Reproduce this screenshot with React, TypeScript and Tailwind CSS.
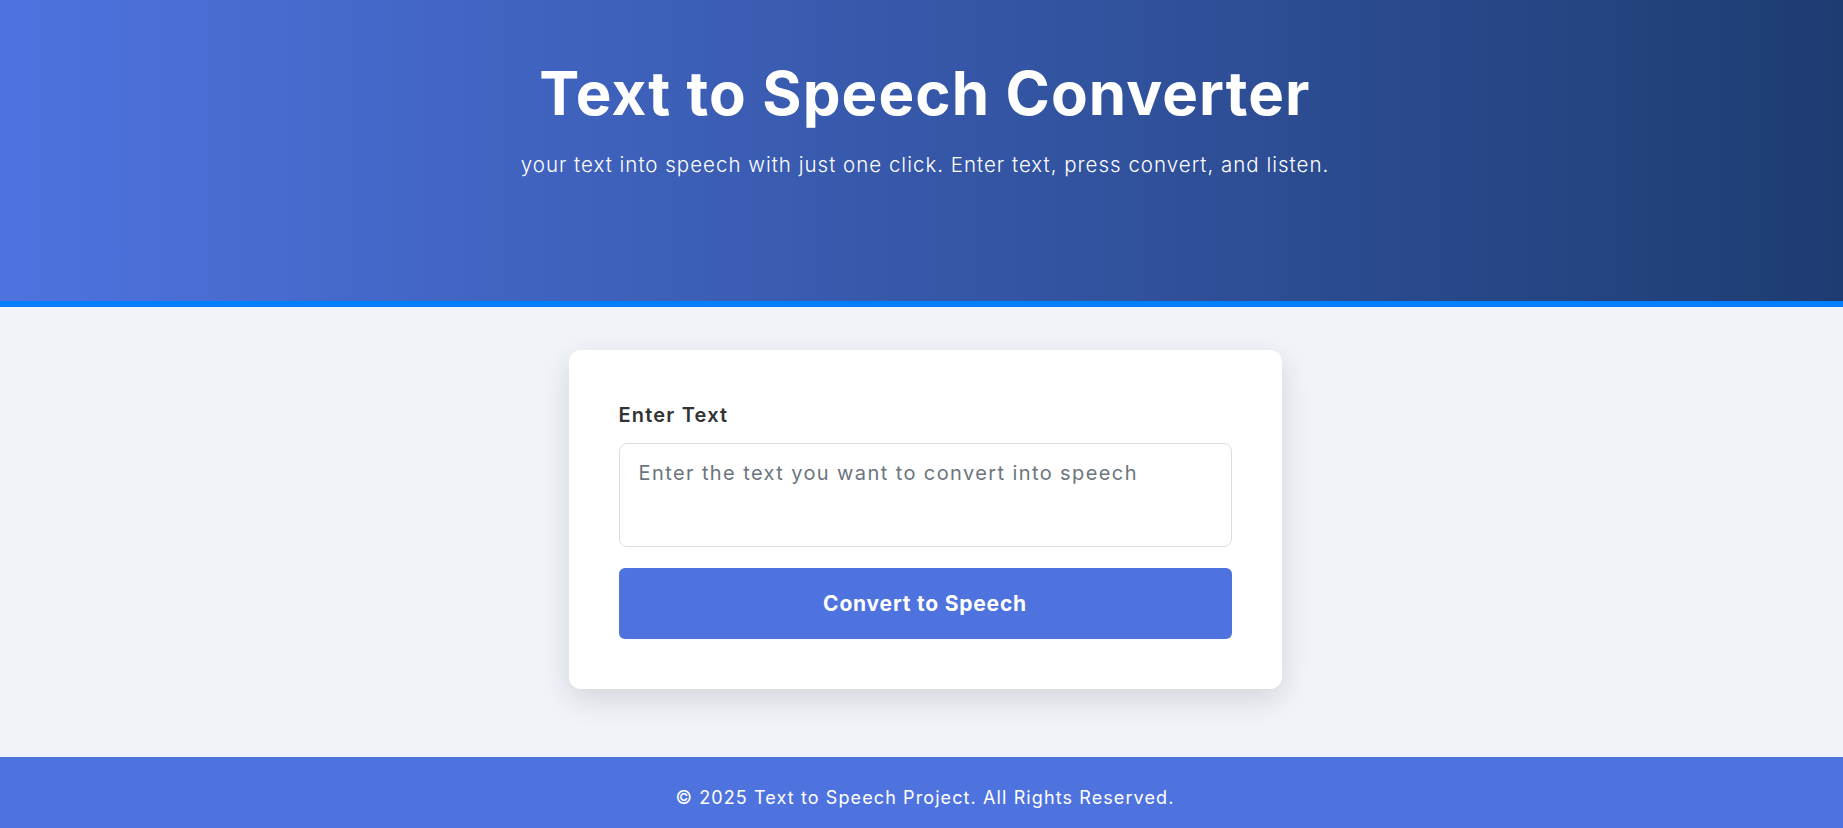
export default function App() {
  return (
    <div className="flex min-h-screen flex-col bg-[#f0f4f8] font-['Inter','Noto_Sans',sans-serif]">
      <header className="h-[307px] border-b-[6px] border-[#0080ff] bg-[linear-gradient(to_right,#4e73df,#1e3c72)] pt-[61px] pl-[7px] text-center text-white">
        <h1 className="text-[60px] font-bold leading-[64px] tracking-[1.1px]">
          Text to Speech Converter
        </h1>
        <p className="mt-[26px] text-[20.5px] font-light leading-[28px] tracking-[1px]">
          your text into speech with just one click. Enter text, press convert,
          and listen.
        </p>
      </header>

      <main className="flex justify-center pt-[43px] pb-[68px] pl-[7px]">
        <div className="w-[713px] rounded-[12px] bg-white p-[50px] shadow-[0_10px_30px_rgba(0,0,0,0.13)]">
          <label className="block text-[20px] font-semibold leading-[30px] tracking-[1.2px] text-[#333]">
            Enter Text
          </label>
          <textarea
            className="mt-[13px] block h-[104px] w-full resize-none rounded-[8px] border border-[#ddd] px-[19px] py-[14px] text-[20px] leading-[30px] tracking-[1.4px] text-[#333] outline-none placeholder:text-[#6c757d]"
            placeholder="Enter the text you want to convert into speech"
          />
          <button className="mt-[21px] block h-[71px] w-full rounded-[6px] bg-[#4e73df] text-[21px] font-bold tracking-[0.8px] text-white">
            Convert to Speech
          </button>
        </div>
      </main>

      <footer className="bg-[#4e73df] pt-[27px] pb-[23px] pl-[7px] text-center text-[18px] leading-[27px] tracking-[1.1px] text-white">
        © 2025 Text to Speech Project. All Rights Reserved.
      </footer>
    </div>
  );
}
